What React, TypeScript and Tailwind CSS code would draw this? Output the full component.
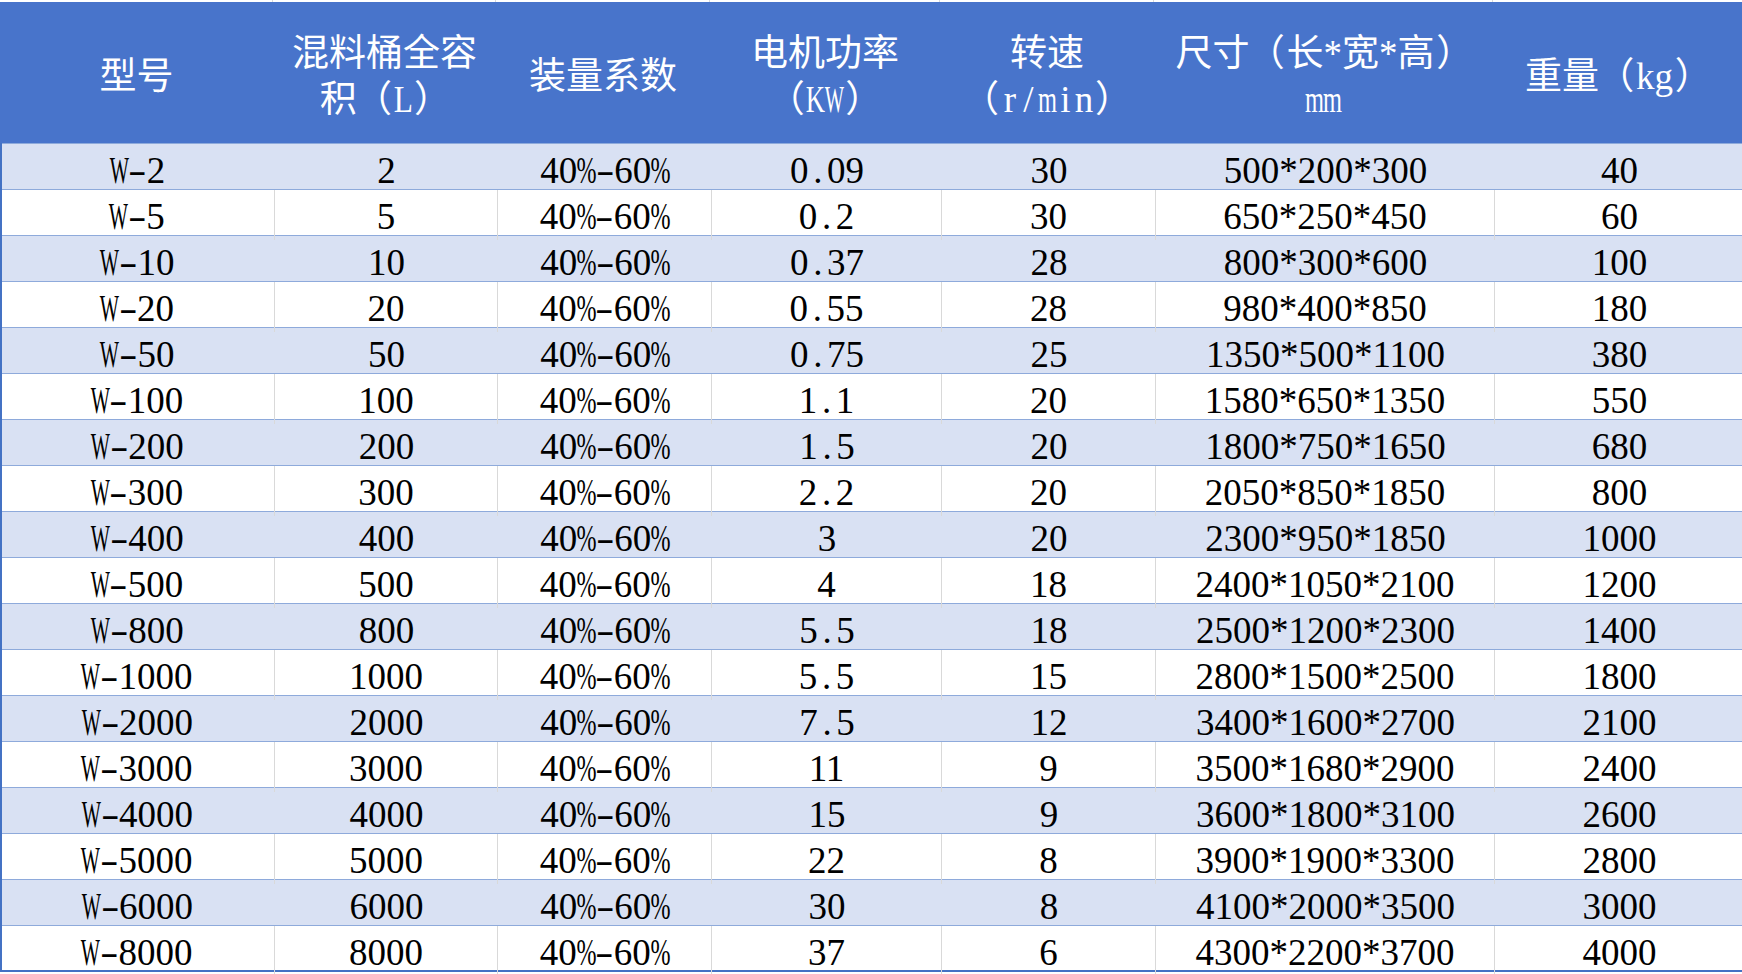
import React from "react";

const rows: string[][] = [
  ["W-2", "2", "40%-60%", "0.09", "30", "500*200*300", "40"],
  ["W-5", "5", "40%-60%", "0.2", "30", "650*250*450", "60"],
  ["W-10", "10", "40%-60%", "0.37", "28", "800*300*600", "100"],
  ["W-20", "20", "40%-60%", "0.55", "28", "980*400*850", "180"],
  ["W-50", "50", "40%-60%", "0.75", "25", "1350*500*1100", "380"],
  ["W-100", "100", "40%-60%", "1.1", "20", "1580*650*1350", "550"],
  ["W-200", "200", "40%-60%", "1.5", "20", "1800*750*1650", "680"],
  ["W-300", "300", "40%-60%", "2.2", "20", "2050*850*1850", "800"],
  ["W-400", "400", "40%-60%", "3", "20", "2300*950*1850", "1000"],
  ["W-500", "500", "40%-60%", "4", "18", "2400*1050*2100", "1200"],
  ["W-800", "800", "40%-60%", "5.5", "18", "2500*1200*2300", "1400"],
  ["W-1000", "1000", "40%-60%", "5.5", "15", "2800*1500*2500", "1800"],
  ["W-2000", "2000", "40%-60%", "7.5", "12", "3400*1600*2700", "2100"],
  ["W-3000", "3000", "40%-60%", "11", "9", "3500*1680*2900", "2400"],
  ["W-4000", "4000", "40%-60%", "15", "9", "3600*1800*3100", "2600"],
  ["W-5000", "5000", "40%-60%", "22", "8", "3900*1900*3300", "2800"],
  ["W-6000", "6000", "40%-60%", "30", "8", "4100*2000*3500", "3000"],
  ["W-8000", "8000", "40%-60%", "37", "6", "4300*2200*3700", "4000"],
];

const headers: string[][] = [
  ["型号"],
  ["混料桶全容", "积（L）"],
  ["装量系数"],
  ["电机功率", "（KW）"],
  ["转速", "（r/min）"],
  ["尺寸（长*宽*高）", "mm"],
  ["重量（kg）"],
];

const cols = "grid grid-cols-[273px_223px_214px_230px_214px_339px_249px]";
const font = { fontFamily: '"Liberation Serif", "Noto Sans CJK SC", serif' };

const box = "inline-flex w-[0.5em] justify-center";

function HalfWidth({ text }: { text: string }) {
  return (
    <>
      {text.split("").map((ch, k) => {
        switch (ch) {
          case ".":
          case "r":
          case "i":
          case "n":
          case "g":
          case "k":
          case "/":
            return (
              <span key={k} className={box}>
                {ch}
              </span>
            );
          case "-":
            return (
              <span key={k} className={box}>
                <span className="inline-block scale-x-[1.5]">{ch}</span>
              </span>
            );
          case "W":
            return (
              <span key={k} className={box}>
                <span className="inline-block scale-x-[0.55]">{ch}</span>
              </span>
            );
          case "%":
            return (
              <span key={k} className={box}>
                <span className="inline-block scale-x-[0.65]">{ch}</span>
              </span>
            );
          case "m":
            return (
              <span key={k} className={box}>
                <span className="inline-block scale-x-[0.66]">{ch}</span>
              </span>
            );
          case "K":
            return (
              <span key={k} className={box}>
                <span className="inline-block scale-x-[0.72]">{ch}</span>
              </span>
            );
          case "L":
            return (
              <span key={k} className={box}>
                <span className="inline-block scale-x-[0.85]">{ch}</span>
              </span>
            );
          case "（":
            return (
              <span key={k} className="inline-flex w-[1em] justify-end pr-[0.05em]">
                {ch}
              </span>
            );
          case "）":
            return (
              <span key={k} className="inline-flex w-[1em] justify-start pl-[0.05em]">
                {ch}
              </span>
            );
          default:
            return <React.Fragment key={k}>{ch}</React.Fragment>;
        }
      })}
    </>
  );
}

export default function App() {
  return (
    <div className="w-[1742px] h-[974px] bg-white overflow-hidden" style={font}>
      <div className={`${cols} h-[2px]`}>
        {headers.map((_, i) => (
          <div key={i} className={i < 6 ? "border-r border-[#d9d9d9]" : ""} />
        ))}
      </div>
      <div className={`${cols} h-[141px] bg-[#4874cb] text-white`}>
        {headers.map((h, i) => (
          <div key={i} className="flex flex-col items-center justify-center pt-[8px] text-[37px] leading-[46px] whitespace-nowrap">
            {h.map((line, j) => (
              <div key={j}>
                <HalfWidth text={line} />
              </div>
            ))}
          </div>
        ))}
      </div>
      <div className="border-l-2 border-[#4472c4]">
        <div className="h-px bg-[#8eaadb]" />
        {rows.map((r, i) => {
          const shaded = i % 2 === 0;
          const last = i === rows.length - 1;
          return (
            <div
              key={i}
              className={`${cols} h-[46px] ${shaded ? "bg-[#d9e1f3]" : "bg-white"} ${
                last ? "border-b-2 border-[#4472c4]" : "border-b border-[#8eaadb]"
              }`}
            >
              {r.map((c, j) => (
                <div
                  key={j}
                  className={`text-center text-black text-[37px] leading-[46px] pt-[4px] whitespace-nowrap ${
                    !shaded && j < 6 ? "border-r border-[#d9d9d9]" : ""
                  } ${j === 0 ? "-ml-[2px]" : ""}`}
                >
                  <HalfWidth text={c} />
                </div>
              ))}
            </div>
          );
        })}
      </div>
    </div>
  );
}
